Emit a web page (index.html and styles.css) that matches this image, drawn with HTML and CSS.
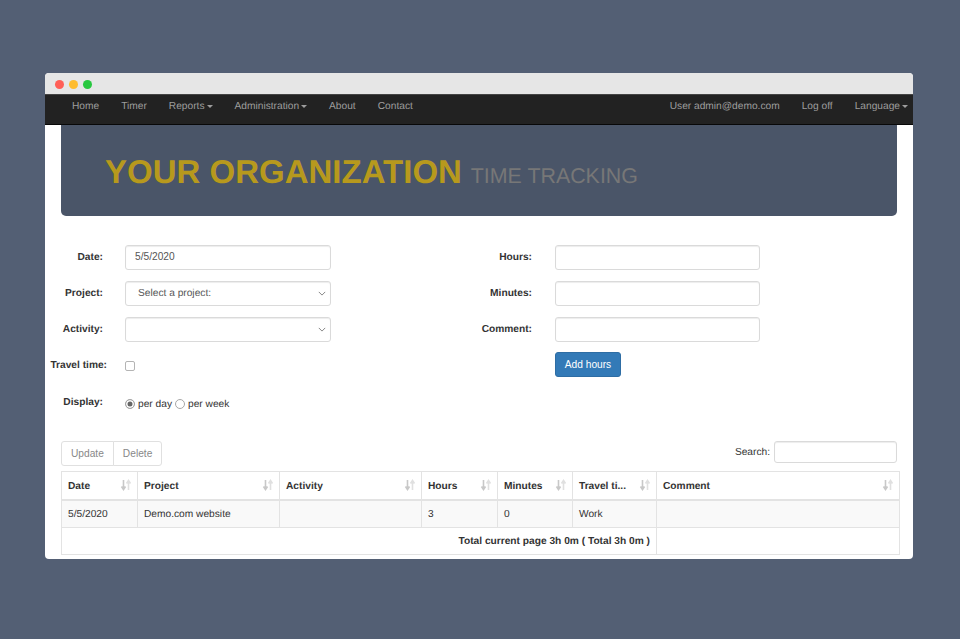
FILE: index.html
```html
<!DOCTYPE html>
<html lang="en">
<head>
<meta charset="utf-8">
<title>Time tracking</title>
<link rel="stylesheet" href="styles.css">
</head>
<body>
<div class="window">
  <div class="titlebar">
    <span class="dot dot-red"></span><span class="dot dot-yellow"></span><span class="dot dot-green"></span>
  </div>
  <nav class="navbar">
    <ul class="nav">
      <li>Home</li>
      <li>Timer</li>
      <li>Reports<span class="caret"></span></li>
      <li>Administration<span class="caret"></span></li>
      <li>About</li>
      <li>Contact</li>
    </ul>
    <ul class="nav nav-right">
      <li>User admin@demo.com</li>
      <li>Log off</li>
      <li>Language<span class="caret"></span></li>
    </ul>
  </nav>
  <main class="content">
    <header class="jumbo">
      <span class="org">YOUR ORGANIZATION</span>
      <span class="sub">TIME TRACKING</span>
    </header>
    <form class="form">
      <div class="col col-left">
        <div class="row"><label class="lbl">Date:</label><input class="field field-date" type="text" value="5/5/2020"></div>
        <div class="row"><label class="lbl">Project:</label>
          <div class="field select"><span>Select a project:</span><svg class="chev" viewBox="0 0 10 6"><path d="M1 1l4 4 4-4" fill="none" stroke="#777" stroke-width="1.1"/></svg></div>
        </div>
        <div class="row"><label class="lbl">Activity:</label>
          <div class="field select"><span></span><svg class="chev" viewBox="0 0 10 6"><path d="M1 1l4 4 4-4" fill="none" stroke="#777" stroke-width="1.1"/></svg></div>
        </div>
        <div class="row row-check"><label class="lbl lbl-travel">Travel time:</label><span class="check"></span></div>
        <div class="row row-display"><label class="lbl">Display:</label>
          <div class="radios"><span class="radio radio-on"></span><span class="rtext">per day</span><span class="radio"></span><span class="rtext">per week</span></div>
        </div>
      </div>
      <div class="col col-right">
        <div class="row"><label class="lbl">Hours:</label><input class="field field-short" type="text"></div>
        <div class="row"><label class="lbl">Minutes:</label><input class="field field-short" type="text"></div>
        <div class="row row-last"><label class="lbl">Comment:</label><input class="field field-short" type="text"></div>
        <div class="row"><span class="lbl"></span><button class="btn-add" type="button">Add hours</button></div>
      </div>
    </form>
    <div class="toolbar">
      <div class="btn-group"><button class="btn" type="button">Update</button><button class="btn" type="button">Delete</button></div>
      <div class="search"><span>Search:</span><input class="search-input" type="text"></div>
    </div>
    <table class="table">
      <colgroup>
        <col class="c-date"><col class="c-project"><col class="c-activity"><col class="c-hours"><col class="c-minutes"><col class="c-travel"><col class="c-comment">
      </colgroup>
      <thead>
        <tr>
          <th>Date<svg class="sort" viewBox="0 0 12 12"><path d="M3.5 1v9M1.5 7.5l2 3 2-3" fill="none" stroke="#c8c8c8" stroke-width="1.6"/><path d="M8.5 11V2M6.5 4.5l2-3 2 3" fill="none" stroke="#e0e0e0" stroke-width="1.6"/></svg></th>
          <th>Project<svg class="sort" viewBox="0 0 12 12"><path d="M3.5 1v9M1.5 7.5l2 3 2-3" fill="none" stroke="#c8c8c8" stroke-width="1.6"/><path d="M8.5 11V2M6.5 4.5l2-3 2 3" fill="none" stroke="#e0e0e0" stroke-width="1.6"/></svg></th>
          <th>Activity<svg class="sort" viewBox="0 0 12 12"><path d="M3.5 1v9M1.5 7.5l2 3 2-3" fill="none" stroke="#c8c8c8" stroke-width="1.6"/><path d="M8.5 11V2M6.5 4.5l2-3 2 3" fill="none" stroke="#e0e0e0" stroke-width="1.6"/></svg></th>
          <th>Hours<svg class="sort" viewBox="0 0 12 12"><path d="M3.5 1v9M1.5 7.5l2 3 2-3" fill="none" stroke="#c8c8c8" stroke-width="1.6"/><path d="M8.5 11V2M6.5 4.5l2-3 2 3" fill="none" stroke="#e0e0e0" stroke-width="1.6"/></svg></th>
          <th>Minutes<svg class="sort" viewBox="0 0 12 12"><path d="M3.5 1v9M1.5 7.5l2 3 2-3" fill="none" stroke="#c8c8c8" stroke-width="1.6"/><path d="M8.5 11V2M6.5 4.5l2-3 2 3" fill="none" stroke="#e0e0e0" stroke-width="1.6"/></svg></th>
          <th>Travel ti...<svg class="sort" viewBox="0 0 12 12"><path d="M3.5 1v9M1.5 7.5l2 3 2-3" fill="none" stroke="#c8c8c8" stroke-width="1.6"/><path d="M8.5 11V2M6.5 4.5l2-3 2 3" fill="none" stroke="#e0e0e0" stroke-width="1.6"/></svg></th>
          <th>Comment<svg class="sort" viewBox="0 0 12 12"><path d="M3.5 1v9M1.5 7.5l2 3 2-3" fill="none" stroke="#c8c8c8" stroke-width="1.6"/><path d="M8.5 11V2M6.5 4.5l2-3 2 3" fill="none" stroke="#e0e0e0" stroke-width="1.6"/></svg></th>
        </tr>
      </thead>
      <tbody>
        <tr class="odd"><td>5/5/2020</td><td>Demo.com website</td><td></td><td>3</td><td>0</td><td>Work</td><td></td></tr>
      </tbody>
      <tfoot>
        <tr><td colspan="6" class="total">Total current page 3h 0m ( Total 3h 0m )</td><td></td></tr>
      </tfoot>
    </table>
  </main>
</div>
</body>
</html>
```
FILE: styles.css
```css
* { box-sizing: border-box; }
html, body { margin: 0; height: 100%; }
body {
  background: #535f74;
  padding: 73px 47px 0 45px;
  font-family: "Liberation Sans", Arial, sans-serif;
  font-size: 10.2px;
  color: #333;
  overflow: hidden;
  text-rendering: geometricPrecision;
}
.window {
  height: 486px;
  background: #fff;
  border-radius: 4px;
  overflow: hidden;
}
.titlebar {
  height: 21px;
  background: #e6e6e6;
  display: flex;
  align-items: center;
  gap: 5px;
  padding: 1px 0 0 10px;
}
.dot { width: 9px; height: 9px; border-radius: 50%; }
.dot-red { background: #ff5f57; }
.dot-yellow { background: #febc2e; }
.dot-green { background: #28c840; }
.navbar {
  height: 31px;
  background: #222;
  border-top: 1px solid #444;
  border-bottom: 1px solid #080808;
  display: flex;
  justify-content: space-between;
  color: #9d9d9d;
}
.nav {
  list-style: none;
  margin: 0;
  padding: 0 0 0 16px;
  display: flex;
}
.nav li { padding: 5px 11px 0; line-height: 13px; }
.nav-right { padding: 0; }
.nav-right li:last-child { padding-right: 5px; }
.caret {
  display: inline-block;
  width: 0;
  height: 0;
  margin-left: 2px;
  vertical-align: middle;
  border-top: 3px solid #9d9d9d;
  border-left: 3px solid transparent;
  border-right: 3px solid transparent;
}
.content { padding: 0 16px; }
.jumbo {
  height: 91px;
  background: #4a5568;
  border-radius: 0 0 5px 5px;
  padding: 27px 0 0 44px;
  white-space: nowrap;
  line-height: 40px;
}
.org { font-size: 33px; font-weight: 700; color: #b7991d; }
.sub { font-size: 21.4px; color: #777; margin-left: 6px; }
.form { display: flex; padding-top: 29px; height: 225px; }
.col { flex: none; }
.col-left { width: 390px; margin-left: -11px; }
.col-right { margin-left: 11px; width: 430px; }
.row { display: flex; align-items: center; height: 25px; margin-bottom: 11px; }
.row-last { margin-bottom: 10px; }
.lbl {
  flex: none;
  text-align: right;
  font-weight: 700;
  white-space: nowrap;
}
.col-left .lbl { width: 53px; margin-right: 22px; }
.col-right .lbl { width: 81px; margin-right: 23px; }
.col-left .lbl-travel { width: 57px; margin-right: 18px; }
.field {
  width: 206px;
  height: 25px;
  border: 1px solid #dadada;
  border-radius: 3px;
  box-shadow: inset 0 1px 1px rgba(0,0,0,.075);
  padding: 0 12px 1px;
  font: 10.2px "Liberation Sans", Arial, sans-serif;
  color: #555;
  background: #fff;
}
.field-short { width: 205px; }
.field-date { padding: 0 9px 3px; }
.select { display: flex; align-items: center; justify-content: space-between; padding-right: 4px; }
.chev { width: 8px; height: 5px; }
.row-check { margin-bottom: 12px; }
.check { width: 10px; height: 10px; border: 1px solid #b4b4b4; border-radius: 2px; background: #fff; }
.radios { display: flex; align-items: center; padding-top: 3px; }
.radio { width: 10px; height: 10px; border: 1px solid #a8a8a8; border-radius: 50%; background: #fff; margin-right: 3px; }
.radio-on { background: #666; box-shadow: inset 0 0 0 1.5px #fff; }
.rtext { margin-right: 3px; }
.btn-add {
  height: 25px;
  width: 66px;
  padding: 0;
  background: #337ab7;
  border: 1px solid #2e6da4;
  border-radius: 3px;
  color: #fff;
  font: 10.2px "Liberation Sans", Arial, sans-serif;
}
.toolbar { display: flex; justify-content: space-between; align-items: flex-start; height: 30px; }
.btn-group { display: flex; }
.btn {
  height: 25px;
  background: #fff;
  border: 1px solid #e0e0e0;
  color: #888;
  padding: 0 9px;
  font: 10.2px "Liberation Sans", Arial, sans-serif;
}
.btn:first-child { border-radius: 3px 0 0 3px; }
.btn:last-child { border-radius: 0 3px 3px 0; margin-left: -1px; }
.search { display: flex; align-items: center; gap: 4px; }
.search-input { width: 123px; height: 22px; border: 1px solid #dadada; border-radius: 3px; box-shadow: inset 0 1px 1px rgba(0,0,0,.075); }
.table {
  width: 839px;
  border-collapse: collapse;
  table-layout: fixed;
}
.c-date { width: 76px; }
.c-project { width: 142px; }
.c-activity { width: 142px; }
.c-hours { width: 76px; }
.c-minutes { width: 75px; }
.c-travel { width: 84px; }
.table th, .table td { border: 1px solid #e3e3e3; padding: 2px 6px 0; text-align: left; }
.table th { height: 28px; position: relative; border-bottom-width: 2px; font-weight: 700; }
.table td { height: 27.5px; }
.odd td { background: #f9f9f9; }
.table .total { text-align: right; font-weight: 700; }
.sort { position: absolute; right: 5px; top: 7px; width: 12px; height: 12px; }
```
